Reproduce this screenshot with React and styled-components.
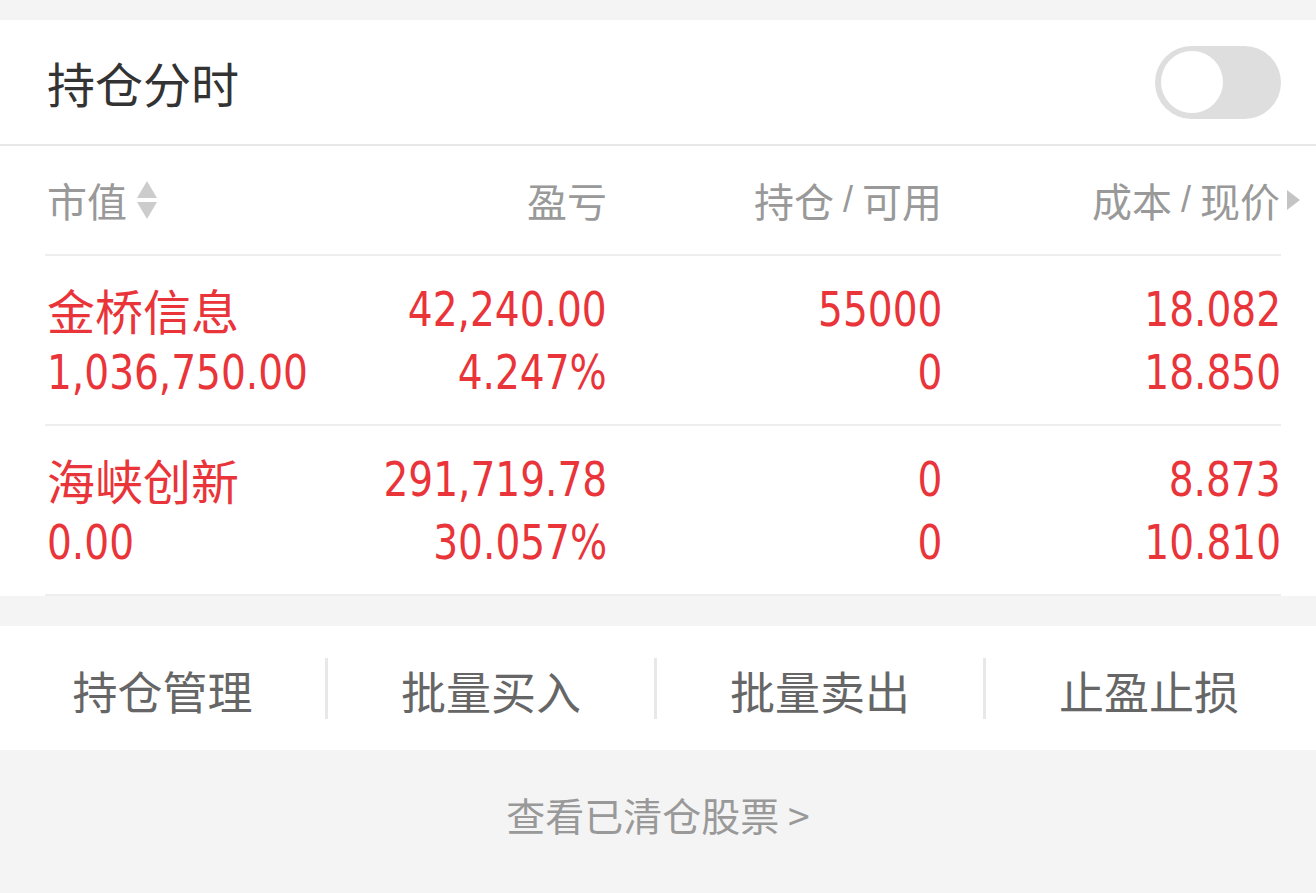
import React from 'react';
import styled, { createGlobalStyle } from 'styled-components';

const GlobalStyle = createGlobalStyle`
  html, body {
    margin: 0;
    padding: 0;
    background: #f4f4f4;
  }
  body {
    font-family: 'Noto Sans CJK SC', 'Noto Sans', sans-serif;
  }
`;

const Page = styled.div`
  width: 1316px;
  min-height: 893px;
  background: #f4f4f4;
  padding-top: 20px;
  box-sizing: border-box;
`;

const Card = styled.section`
  background: #ffffff;
`;

const TitleBar = styled.div`
  height: 126px;
  display: flex;
  align-items: center;
  justify-content: space-between;
  padding: 0 35px 0 47px;
  border-bottom: 2px solid #e8e8e8;
  box-sizing: border-box;
`;

const Title = styled.h2`
  margin: 0;
  font-size: 48px;
  font-weight: 400;
  color: #333333;
  line-height: 1;
`;

const Toggle = styled.div`
  width: 126px;
  height: 73px;
  border-radius: 37px;
  background: #dedede;
  padding: 6px;
  box-sizing: border-box;
  display: flex;
  align-items: center;
  justify-content: ${p => (p.on ? 'flex-end' : 'flex-start')};
`;

const Knob = styled.div`
  width: 62px;
  height: 62px;
  border-radius: 50%;
  background: #ffffff;
`;

const Table = styled.div`
  padding: 0 35px 0 45px;
`;

const Grid = styled.div`
  display: grid;
  grid-template-columns: 281px 281px 335px 1fr;
  border-bottom: 2px solid #eeeeee;
  box-sizing: border-box;
`;

const HeadRow = styled(Grid)`
  height: 110px;
  align-items: center;
`;

const DataRow = styled(Grid)`
  height: 170px;
  padding-top: 21px;
  box-sizing: border-box;
  align-content: start;
`;

const HeadCell = styled.div`
  display: flex;
  align-items: center;
  justify-content: ${p => (p.left ? 'flex-start' : 'flex-end')};
  font-size: 40px;
  color: #999999;
  line-height: 1;
  padding-left: ${p => (p.left ? '2px' : '0')};
  margin-right: ${p => (p.last ? '-19px' : '0')};
`;

const Slash = styled.span`
  margin: 0 9px;
  font-family: 'Liberation Sans', sans-serif;
  font-size: 36px;
`;

const SortIcon = styled.svg`
  width: 22px;
  height: 38px;
  margin-left: 9px;
`;

const MoreIcon = styled.svg`
  width: 13px;
  height: 20px;
  margin-left: 7px;
`;

const Cell = styled.div`
  min-width: 0;
  height: 63px;
  display: flex;
  align-items: center;
  justify-content: ${p => (p.left ? 'flex-start' : 'flex-end')};
  padding-left: ${p => (p.left ? '2px' : '0')};
  color: #e9343a;
  white-space: nowrap;
`;

const Name = styled.span`
  font-size: 48px;
  line-height: 1;
`;

// no condensed DIN here: squeeze the condensed DejaVu a little more
const Num = styled.span`
  display: inline-block;
  font-family: 'DejaVu Sans Condensed', 'DejaVu Sans', sans-serif;
  font-size: 48px;
  line-height: 1;
  transform: scaleX(0.905);
  transform-origin: ${p => (p.left ? 'left' : 'right')} center;
`;

const Actions = styled.div`
  margin-top: 30px;
  height: 124px;
  background: #ffffff;
  display: grid;
  grid-template-columns: repeat(4, 1fr);
  align-items: center;
`;

const ActionBtn = styled.button`
  height: 61px;
  border: none;
  background: transparent;
  padding: 0 4px 0 0;
  margin-left: ${p => (p.first ? '0' : '-4px')};
  font-family: 'Noto Sans CJK SC', sans-serif;
  font-size: 45px;
  color: #666666;
  border-left: ${p => (p.first ? 'none' : '3px solid #e8e8e8')};
  cursor: pointer;
`;

const Footer = styled.div`
  height: 128px;
  display: flex;
  align-items: center;
  justify-content: center;
  font-size: 39px;
  color: #999999;
`;

const rows = [
  { name: '金桥信息', value: '1,036,750.00', pl: '42,240.00', plPct: '4.247%', hold: '55000', avail: '0', cost: '18.082', price: '18.850' },
  { name: '海峡创新', value: '0.00', pl: '291,719.78', plPct: '30.057%', hold: '0', avail: '0', cost: '8.873', price: '10.810' },
];

function App() {
  return (
    <Page>
      <GlobalStyle />
      <Card>
        <TitleBar>
          <Title>持仓分时</Title>
          <Toggle>
            <Knob />
          </Toggle>
        </TitleBar>
        <Table>
          <HeadRow>
            <HeadCell left>
              市值
              <SortIcon viewBox="0 0 22 38">
                <path d="M11 0 L21 17 L1 17 Z" fill="#cccccc" />
                <path d="M1 21 L21 21 L11 38 Z" fill="#cccccc" />
              </SortIcon>
            </HeadCell>
            <HeadCell>盈亏</HeadCell>
            <HeadCell>持仓<Slash>/</Slash>可用</HeadCell>
            <HeadCell last>
              成本<Slash>/</Slash>现价
              <MoreIcon viewBox="0 0 13 20">
                <path d="M0 0 L13 10 L0 20 Z" fill="#c4c4c4" />
              </MoreIcon>
            </HeadCell>
          </HeadRow>
          {rows.map((r, i) => (
            <DataRow key={i}>
              <Cell left><Name>{r.name}</Name></Cell>
              <Cell><Num>{r.pl}</Num></Cell>
              <Cell><Num>{r.hold}</Num></Cell>
              <Cell><Num>{r.cost}</Num></Cell>
              <Cell left><Num left>{r.value}</Num></Cell>
              <Cell><Num>{r.plPct}</Num></Cell>
              <Cell><Num>{r.avail}</Num></Cell>
              <Cell><Num>{r.price}</Num></Cell>
            </DataRow>
          ))}
        </Table>
      </Card>
      <Actions>
        <ActionBtn first>持仓管理</ActionBtn>
        <ActionBtn>批量买入</ActionBtn>
        <ActionBtn>批量卖出</ActionBtn>
        <ActionBtn>止盈止损</ActionBtn>
      </Actions>
      <Footer>查看已清仓股票 &gt;</Footer>
    </Page>
  );
}

export default App;
